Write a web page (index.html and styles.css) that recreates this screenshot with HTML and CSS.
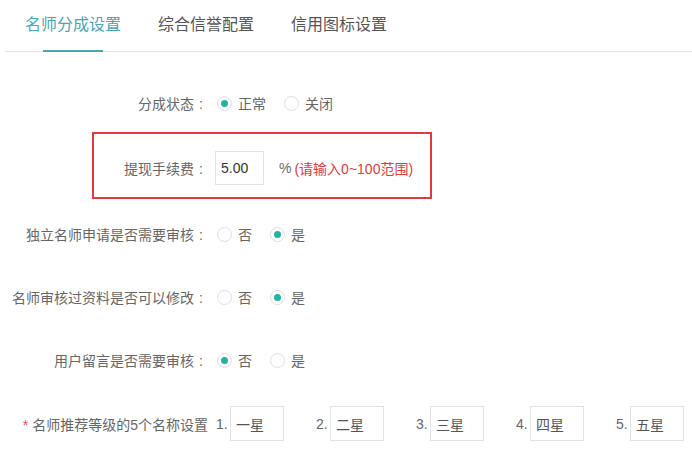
FILE: index.html
```
<!DOCTYPE html>
<html lang="zh-CN">
<head>
    <meta charset="UTF-8">
    <meta name="viewport" content="width=device-width, initial-scale=1.0">
    <title>名师分成设置</title>
    <link rel="stylesheet" href="styles.css">
</head>
<body>
    <div class="tabs">
        <div class="tab active">名师分成设置</div>
        <div class="tab">综合信誉配置</div>
        <div class="tab">信用图标设置</div>
    </div>

    <div class="form">
        <div class="row">
            <div class="label">分成状态<span class="colon">:</span></div>
            <label class="radio checked"><span class="dot"></span>正常</label>
            <label class="radio"><span class="dot"></span>关闭</label>
        </div>

        <div class="fee-box">
            <div class="label">提现手续费<span class="colon">:</span></div>
            <input class="box fee" type="text" value="5.00">
            <span class="unit">%</span>
            <span class="hint">(请输入0~100范围)</span>
        </div>

        <div class="row">
            <div class="label">独立名师申请是否需要审核<span class="colon">:</span></div>
            <label class="radio"><span class="dot"></span>否</label>
            <label class="radio checked"><span class="dot"></span>是</label>
        </div>

        <div class="row">
            <div class="label">名师审核过资料是否可以修改<span class="colon">:</span></div>
            <label class="radio"><span class="dot"></span>否</label>
            <label class="radio checked"><span class="dot"></span>是</label>
        </div>

        <div class="row">
            <div class="label">用户留言是否需要审核<span class="colon">:</span></div>
            <label class="radio checked"><span class="dot"></span>否</label>
            <label class="radio"><span class="dot"></span>是</label>
        </div>

        <div class="row stars">
            <div class="label"><span class="req">*</span>名师推荐等级的5个名称设置</div>
            <div class="star"><span class="num">1.</span><input class="box name" type="text" value="一星"></div>
            <div class="star"><span class="num">2.</span><input class="box name" type="text" value="二星"></div>
            <div class="star"><span class="num">3.</span><input class="box name" type="text" value="三星"></div>
            <div class="star"><span class="num">4.</span><input class="box name" type="text" value="四星"></div>
            <div class="star"><span class="num">5.</span><input class="box name" type="text" value="五星"></div>
        </div>
    </div>
</body>
</html>
```

FILE: styles.css
```
body {
    margin: 0;
    font-family: "Liberation Sans", "Noto Sans CJK SC", sans-serif;
    font-size: 14px;
    color: #666;
    background: #fff;
}
.tabs {
    display: flex;
    gap: 37px;
    height: 51px;
    margin-left: 5px;
    padding-left: 20px;
    border-bottom: 1px solid #e2e6ea;
}
.tab {
    position: relative;
    line-height: 50px;
    font-size: 16px;
    color: #555;
}
.tab.active {
    color: #4aa6b6;
}
.tab.active::after {
    content: "";
    position: absolute;
    left: 50%;
    bottom: -1px;
    width: 60px;
    height: 2px;
    margin-left: -30px;
    background: #4aa6b6;
}
.form {
    padding-top: 34px;
}
.row {
    display: flex;
    align-items: center;
    height: 34px;
    margin-bottom: 29px;
}
.label {
    width: 208px;
    text-align: right;
    flex-shrink: 0;
    color: #666;
}
.colon {
    display: inline-block;
    width: 14px;
    text-align: center;
}
.radio {
    display: flex;
    align-items: center;
    margin-left: 9px;
    margin-right: 9px;
    color: #666;
}
.radio .dot {
    width: 13px;
    height: 13px;
    border: 1px solid #dcdfe6;
    border-radius: 50%;
    margin-right: 6px;
    display: flex;
    align-items: center;
    justify-content: center;
}
.radio.checked .dot::after {
    content: "";
    width: 7px;
    height: 7px;
    border-radius: 50%;
    background: #22b3a3;
}
.fee-box {
    display: flex;
    align-items: center;
    width: 336px;
    height: 34px;
    margin: -17px 0 18px 92px;
    padding: 17px 0 12px;
    border: 2px solid #e0393e;
}
.fee-box .label {
    width: 114px;
}
.box {
    box-sizing: border-box;
    height: 35px;
    border: 1px solid #dde3e8;
    padding: 0 5px;
    font-family: "Liberation Sans", "Noto Sans CJK SC", sans-serif;
    font-size: 14px;
    color: #333;
    outline: none;
}
.fee {
    width: 49px;
    height: 34px;
    margin-left: 7px;
}
.unit {
    margin-left: 15px;
    margin-right: 3px;
}
.hint {
    color: #e23a3a;
}
.stars {
    height: 35px;
}
.req {
    color: #f05050;
    margin-right: 4px;
}
.star {
    display: flex;
    align-items: center;
    margin-left: 32px;
}
.stars .star:nth-child(2) {
    margin-left: 8px;
}
.num {
    width: 12px;
    margin-right: 2px;
}
.name {
    width: 54px;
    color: #555;
}
```
